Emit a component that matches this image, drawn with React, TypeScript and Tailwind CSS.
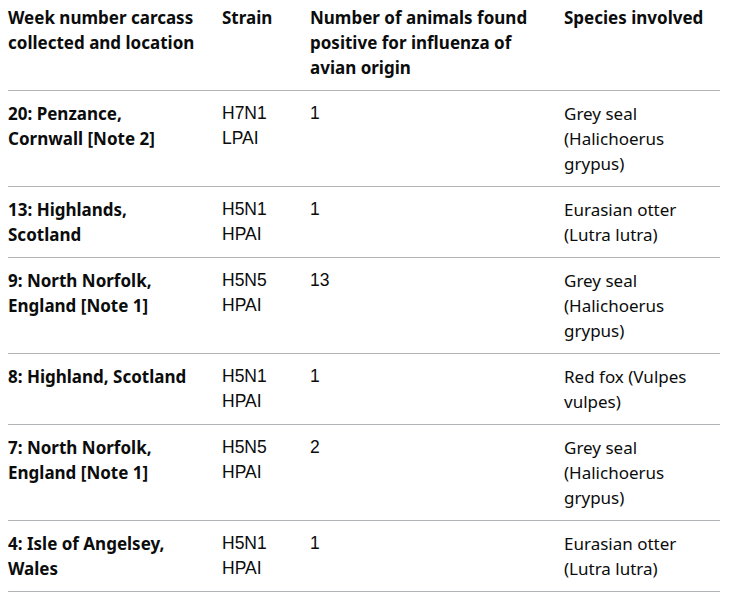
import React from "react";

type Row = { loc: string; strain: [string, string]; num: string; species: string };

const rows: Row[] = [
  { loc: "20: Penzance, Cornwall [Note 2]", strain: ["H7N1", "LPAI"], num: "1", species: "Grey seal (Halichoerus grypus)" },
  { loc: "13: Highlands, Scotland", strain: ["H5N1", "HPAI"], num: "1", species: "Eurasian otter (Lutra lutra)" },
  { loc: "9: North Norfolk, England [Note 1]", strain: ["H5N5", "HPAI"], num: "13", species: "Grey seal (Halichoerus grypus)" },
  { loc: "8: Highland, Scotland", strain: ["H5N1", "HPAI"], num: "1", species: "Red fox (Vulpes vulpes)" },
  { loc: "7: North Norfolk, England [Note 1]", strain: ["H5N5", "HPAI"], num: "2", species: "Grey seal (Halichoerus grypus)" },
  { loc: "4: Isle of Angelsey, Wales", strain: ["H5N1", "HPAI"], num: "1", species: "Eurasian otter (Lutra lutra)" },
];

export default function App() {
  return (
    <div className="bg-white min-h-[597px] px-[8px] text-[#0b0c0c]" style={{ fontFamily: '"Noto Sans", sans-serif' }}>
      <table className="table-fixed border-collapse w-[712px] text-[17px] leading-[25px]">
        <colgroup>
          <col className="w-[214px]" />
          <col className="w-[88px]" />
          <col className="w-[254px]" />
          <col className="w-[156px]" />
        </colgroup>
        <thead>
          <tr className="border-b border-[#b1b4b6]">
            <th className="text-left align-top font-bold pt-[5px] pb-[10px] pr-[20px]">Week number carcass collected and location</th>
            <th className="text-left align-top font-bold pt-[5px] pb-[10px] pr-[20px]">Strain</th>
            <th className="text-left align-top font-bold pt-[5px] pb-[10px] pr-[20px]">Number of animals found positive for influenza of avian origin</th>
            <th className="text-left align-top font-bold pt-[5px] pb-[10px]">Species involved</th>
          </tr>
        </thead>
        <tbody>
          {rows.map((r, i) => (
            <tr key={i} className="border-b border-[#b1b4b6]">
              <td className="align-top font-bold py-[10px] pr-[24px]">{r.loc}</td>
              <td className="align-top py-[10px] pr-[20px] text-[17.5px]" style={{ fontFamily: '"Liberation Sans", Arial, sans-serif' }}>
                {r.strain[0]}
                <br />
                {r.strain[1]}
              </td>
              <td className="align-top py-[10px] pr-[20px] text-[17.5px]" style={{ fontFamily: '"Liberation Sans", Arial, sans-serif' }}>{r.num}</td>
              <td className="align-top py-[10px]">{r.species}</td>
            </tr>
          ))}
        </tbody>
      </table>
    </div>
  );
}
